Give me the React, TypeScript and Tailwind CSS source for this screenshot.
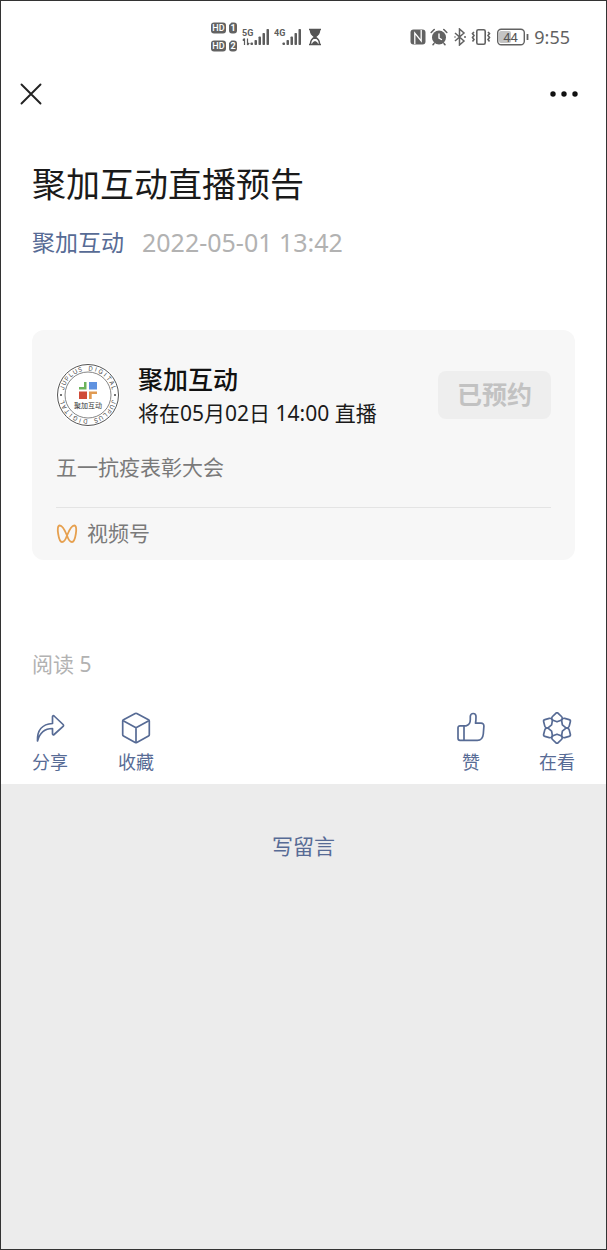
import React from 'react'

const Signal = ({ label, arrows }: { label: string; arrows?: boolean }) => (
    <svg width="28" height="20" viewBox="0 0 28 20" fill="#5c5c5c" aria-hidden="true">
        <text x="0" y="9" fontSize="9" fontWeight="700" fontFamily="Roboto, sans-serif">{label}</text>
        {arrows && (
            <path d="M2.500 11.500v6.500M.8 13.500l1.700-2M5.500 11.500v6.500M7.200 16l-1.700 2" fill="none" stroke="#5c5c5c" strokeWidth="1.200" />
        )}
        <rect x="8.500" y="15.500" width="2.500" height="2.500" rx=".8" />
        <rect x="12.500" y="13" width="2.500" height="5" rx=".8" />
        <rect x="16.500" y="9.500" width="2.500" height="8.500" rx=".8" />
        <rect x="20.500" y="6" width="2.500" height="12" rx=".8" />
        <rect x="24.500" y="2" width="2.500" height="16" rx=".8" />
    </svg>
)

const HdBadge = ({ sim }: { sim: string }) => (
    <svg width="27" height="12" viewBox="0 0 27 12" fontFamily="Roboto, sans-serif" fontSize="9" textAnchor="middle" aria-hidden="true">
        <rect x="0" y="0.500" width="15" height="11" rx="3" fill="#626262" />
        <text x="7.500" y="9.200" fontWeight="500" fill="#fff">HD</text>
        <path d="M20.500 .5H23a3 3 0 0 1 3 3v5a3 3 0 0 1-3 3h-2a3 3 0 0 1-3-3V3z" fill="#626262" />
        <text x="22" y="9.200" fontWeight="700" fill="#fff">{sim}</text>
    </svg>
)

const StatusBar = () => (
    <div className="flex h-[72px] items-center justify-between pl-[210px] pr-9">
        <div className="flex items-center">
            <div className="flex flex-col gap-[6px]">
                <HdBadge sim="1" />
                <HdBadge sim="2" />
            </div>
            <div className="ml-1 flex gap-1">
                <Signal label="5G" arrows />
                <Signal label="4G" />
            </div>
            <svg className="ml-[6px]" width="14" height="18" viewBox="0 0 14 18" fill="none" stroke="#555" strokeWidth="1.500" aria-hidden="true">
                <path d="M1 1.500h12M1 16.500h12" />
                <path d="M2.500 2h9c0 3.500-1 4.700-4.500 7-3.500-2.300-4.500-3.500-4.500-7z" fill="#555" />
                <path d="M2.500 16c0-3.500 1-4.700 4.500-7 3.500 2.300 4.500 3.500 4.500 7" />
                <path d="M4 16c.5-2 1.500-2.500 3-3 1.500.5 2.500 1 3 3z" fill="#555" stroke="none" />
            </svg>
        </div>
        <div className="flex items-center">
            {/* NFC */}
            <svg width="16" height="16" viewBox="0 0 16 16" aria-hidden="true">
                <rect x=".5" y=".5" width="15" height="15" rx="3" fill="#626262" />
                <path d="M4.800 15V4l6.400 8V1" fill="none" stroke="#fff" strokeWidth="1.300" />
            </svg>
            {/* Alarm */}
            <svg className="ml-1" width="18" height="18" viewBox="0 0 18 18" fill="none" stroke="#626262" strokeWidth="1.600" strokeLinecap="round" aria-hidden="true">
                <circle cx="9" cy="9.500" r="7" fill="#626262" stroke="none" />
                <path d="M1.200 4.500L4.200 1.500M16.800 4.500L13.800 1.500M4 15.500l-1 1.200M14 15.500l1 1.200" />
                <path d="M9 6v4l2.500 1.500" stroke="#fff" strokeWidth="1.400" />
            </svg>
            {/* Bluetooth */}
            <svg className="ml-[5px]" width="14" height="18" viewBox="0 0 14 18" fill="none" stroke="#626262" strokeWidth="1.500" aria-hidden="true">
                <path d="M2 5l9 8-4.500 4V1L11 5l-9 8" />
                <circle cx="2" cy="9" r=".8" fill="#626262" stroke="none" />
                <circle cx="12" cy="9" r="1" fill="#626262" stroke="none" />
            </svg>
            {/* Vibrate */}
            <svg className="ml-1" width="20" height="18" viewBox="0 0 20 18" fill="none" stroke="#626262" strokeWidth="1.600" aria-hidden="true">
                <rect x="5.800" y="1.700" width="8.400" height="14.600" rx="1.500" />
                <path d="M3 4L1.500 5.500 3 7.500 1.500 9.500l1.500 2-1.500 2M17 4l1.500 1.500L17 7.500l1.500 2-1.500 2 1.500 2" />
            </svg>
            {/* Battery */}
            <svg className="ml-[6px]" width="32" height="18" viewBox="0 0 32 18" aria-hidden="true">
                <rect x="2" y="3" width="12" height="12" rx="2" fill="#c4c4c4" />
                <rect x=".7" y="1.200" width="26.600" height="15.600" rx="3.500" fill="none" stroke="#626262" strokeWidth="1.400" />
                <path d="M30.500 6v6" stroke="#626262" strokeWidth="1.800" />
                <text x="13.500" y="13.500" fontSize="13" textAnchor="middle" fill="#555" fontFamily="Roboto, sans-serif">44</text>
            </svg>
            <span className="ml-[5px] text-[18px] leading-6 text-[#626262]">9:55</span>
        </div>
    </div>
)

const ringLetters = 'JUPLUS DIGITAL'.split('')

const AccountLogo = () => (
    <svg width="64" height="64" viewBox="0 0 64 64" className="shrink-0" role="img" aria-label="聚加互动">
        <circle cx="32" cy="32" r="32" fill="#fff" />
        <circle cx="32" cy="32" r="30.500" fill="none" stroke="#555" strokeWidth="1" />
        <circle cx="32" cy="32" r="23" fill="none" stroke="#666" strokeWidth=".8" />
        {/* the name runs round the ring twice, one half each */}
        <g fontFamily="Inter, sans-serif" fontSize="6" fill="#444" textAnchor="middle">
            {[0, 180].map((start) =>
                ringLetters.map((letter, i) => (
                    <text key={`${start}-${i}`} x="32" y="7.500" transform={`rotate(${start - 75 + i * 11.5} 32 32)`}>{letter}</text>
                ))
            )}
        </g>
        <circle cx="5" cy="32" r="1" fill="#444" />
        <circle cx="59" cy="32" r="1" fill="#444" />
        <path d="M30.500 19v7.500H23v-2.500h5V19z" fill="#6cb35c" />
        <rect x="33" y="19" width="8" height="7.500" fill="#5f92e0" />
        <rect x="23" y="28.500" width="8" height="7.500" fill="#d04b38" />
        <path d="M33 28.500h8v2.500h-5.300v5H33z" fill="#e09a52" />
        <text x="32" y="44.500" fontSize="7" textAnchor="middle" fill="#333" fontFamily="'Noto Sans CJK SC', sans-serif">聚加互动</text>
    </svg>
)

const ShareIcon = () => (
    <path d="M3.500 29C3 18.500 8 12 18.500 11.500V4.800c0-1 .9-1.400 1.600-.8l9 8.500c.6.600.6 1.300 0 1.900l-9 8.100c-.7.600-1.600.2-1.600-.8v-5.200C11 16.500 6 19.500 3.500 29z" />
)

const BoxIcon = () => (
    <>
        <path d="M15.200 1.500a2 2 0 0 1 1.600 0l11.700 6.300a1.500 1.500 0 0 1 .8 1.300v13.600a1.500 1.500 0 0 1-.8 1.300l-11.700 6.500a2 2 0 0 1-1.600 0L3.500 24a1.500 1.500 0 0 1-.8-1.300V9.100a1.500 1.500 0 0 1 .8-1.300z" />
        <path d="M3.200 8.800L16 15.800l12.800-7M16 15.800v14.500" />
    </>
)

const LikeIcon = () => (
    <>
        <path d="M9 13.800h2c3-.5 4.300-2.800 4.300-6V4.500c0-4 5.700-4 5.700 0 0 2.500 0 4.600-.5 6.700h5.500c2 0 3 1.200 2.900 3l-.6 7.800c-.4 4.200-2.300 6.300-6 6.300H5a2 2 0 0 1-2-2V15.800a2 2 0 0 1 2-2z" />
        <path d="M9 13.800v14.500" />
    </>
)

const WowIcon = () => (
    <>
        {[0, 60, 120, 180, 240, 300].map((angle) => (
            <path key={angle} transform={`rotate(${angle} 16 16)`} d="M14.800 1.300a1.700 1.700 0 0 1 2.400 0l3.300 3.200c.6.600.8 1.300.7 2.200L20.800 8 16 9.800 11.200 8l-.4-1.300c-.1-.9.1-1.600.7-2.200z" />
        ))}
    </>
)

const Action = ({ label, children }: { label: string; children: React.ReactNode }) => (
    <button className="flex w-9 flex-col items-center gap-[6px] whitespace-nowrap text-[18px] leading-6 text-[#576b95]">
        <svg width="32" height="32" viewBox="0 0 32 32" fill="none" stroke="currentColor" strokeWidth="1.700" strokeLinejoin="round" aria-hidden="true">
            {children}
        </svg>
        {label}
    </button>
)

const App = () => {
    return (
        <div className="flex min-h-screen flex-col border border-[#333] bg-white font-['Noto_Sans','Noto_Sans_CJK_SC',sans-serif]">
            <StatusBar />

            <nav className="flex h-[42px] items-center justify-between px-[19px]">
                <button aria-label="关闭">
                    <svg width="22" height="22" viewBox="0 0 22 22" fill="none" stroke="#222" strokeWidth="1.900" strokeLinecap="round">
                        <path d="M1.500 1.500l19 19M20.500 1.500l-19 19" />
                    </svg>
                </button>
                <button aria-label="更多" className="mr-[9px]">
                    <svg width="28" height="22" viewBox="0 0 28 22" fill="#111">
                        <circle cx="3" cy="11" r="2.700" />
                        <circle cx="14" cy="11" r="2.700" />
                        <circle cx="25" cy="11" r="2.700" />
                    </svg>
                </button>
            </nav>

            <main className="px-[31px] pb-[10px] pt-[45px]">
                <h1 className="text-[34px] leading-[48px] text-[#1a1a1a]">聚加互动直播预告</h1>
                <div className="mt-[18px] flex gap-[18px] leading-8">
                    <a href="#" className="text-[23px] text-[#576b95]">聚加互动</a>
                    <time className="text-[25px] text-[#b2b2b2]">2022-05-01 13:42</time>
                </div>

                {/* Live card */}
                <section className="mt-[72px] rounded-xl bg-[#f7f7f7] px-6 pt-[31px]">
                    <div className="flex items-center">
                        <AccountLogo />
                        <div className="ml-[18px] flex-1">
                            <h2 className="text-[25px] font-medium leading-9 text-[#111]">聚加互动</h2>
                            <p className="text-[21px] leading-8 text-[#1a1a1a]">将在05月02日 14:00 直播</p>
                        </div>
                        <button className="h-12 w-[113px] rounded-lg bg-[#eee] text-[25px] font-bold text-[#c2c2c2]">已预约</button>
                    </div>
                    <p className="mt-6 text-[21px] leading-7 text-[#7a7a7a]">五一抗疫表彰大会</p>
                    <div className="mt-[26px] flex h-[53px] items-center gap-[9px] border-t border-[#e4e4e4] text-[21px] text-[#7a7a7a]">
                        <svg width="22" height="20" viewBox="0 0 22 20" fill="none" stroke="#e6a04f" strokeWidth="1.800" strokeLinejoin="round" aria-hidden="true">
                            <path d="M11 11.500C9 6.500 6 1.500 3.700 1.500 1.500 1.500 1.500 6 2.200 10c.7 4.500 1.800 8 3.800 8 2.200 0 4-3.500 5-6.500 2-5 5-10 7.300-10 2.200 0 2.200 4.500 1.500 8.500-.7 4.500-1.800 8-3.800 8-2.200 0-4-3.500-5-6.500z" />
                        </svg>
                        视频号
                    </div>
                </section>

                <p className="mt-[90px] text-[21px] leading-7 text-[#b2b2b2]">阅读 5</p>
                <div className="mt-[34px] flex justify-between">
                    <div className="flex gap-[50px]">
                        <Action label="分享"><ShareIcon /></Action>
                        <Action label="收藏"><BoxIcon /></Action>
                    </div>
                    <div className="flex gap-[50px]">
                        <Action label="赞"><LikeIcon /></Action>
                        <Action label="在看"><WowIcon /></Action>
                    </div>
                </div>
            </main>

            <footer className="flex flex-1 items-start justify-center bg-[#ececec] pt-[46px]">
                <button className="text-[21px] leading-8 text-[#576b95]">写留言</button>
            </footer>
        </div>
    )
}

export default App
